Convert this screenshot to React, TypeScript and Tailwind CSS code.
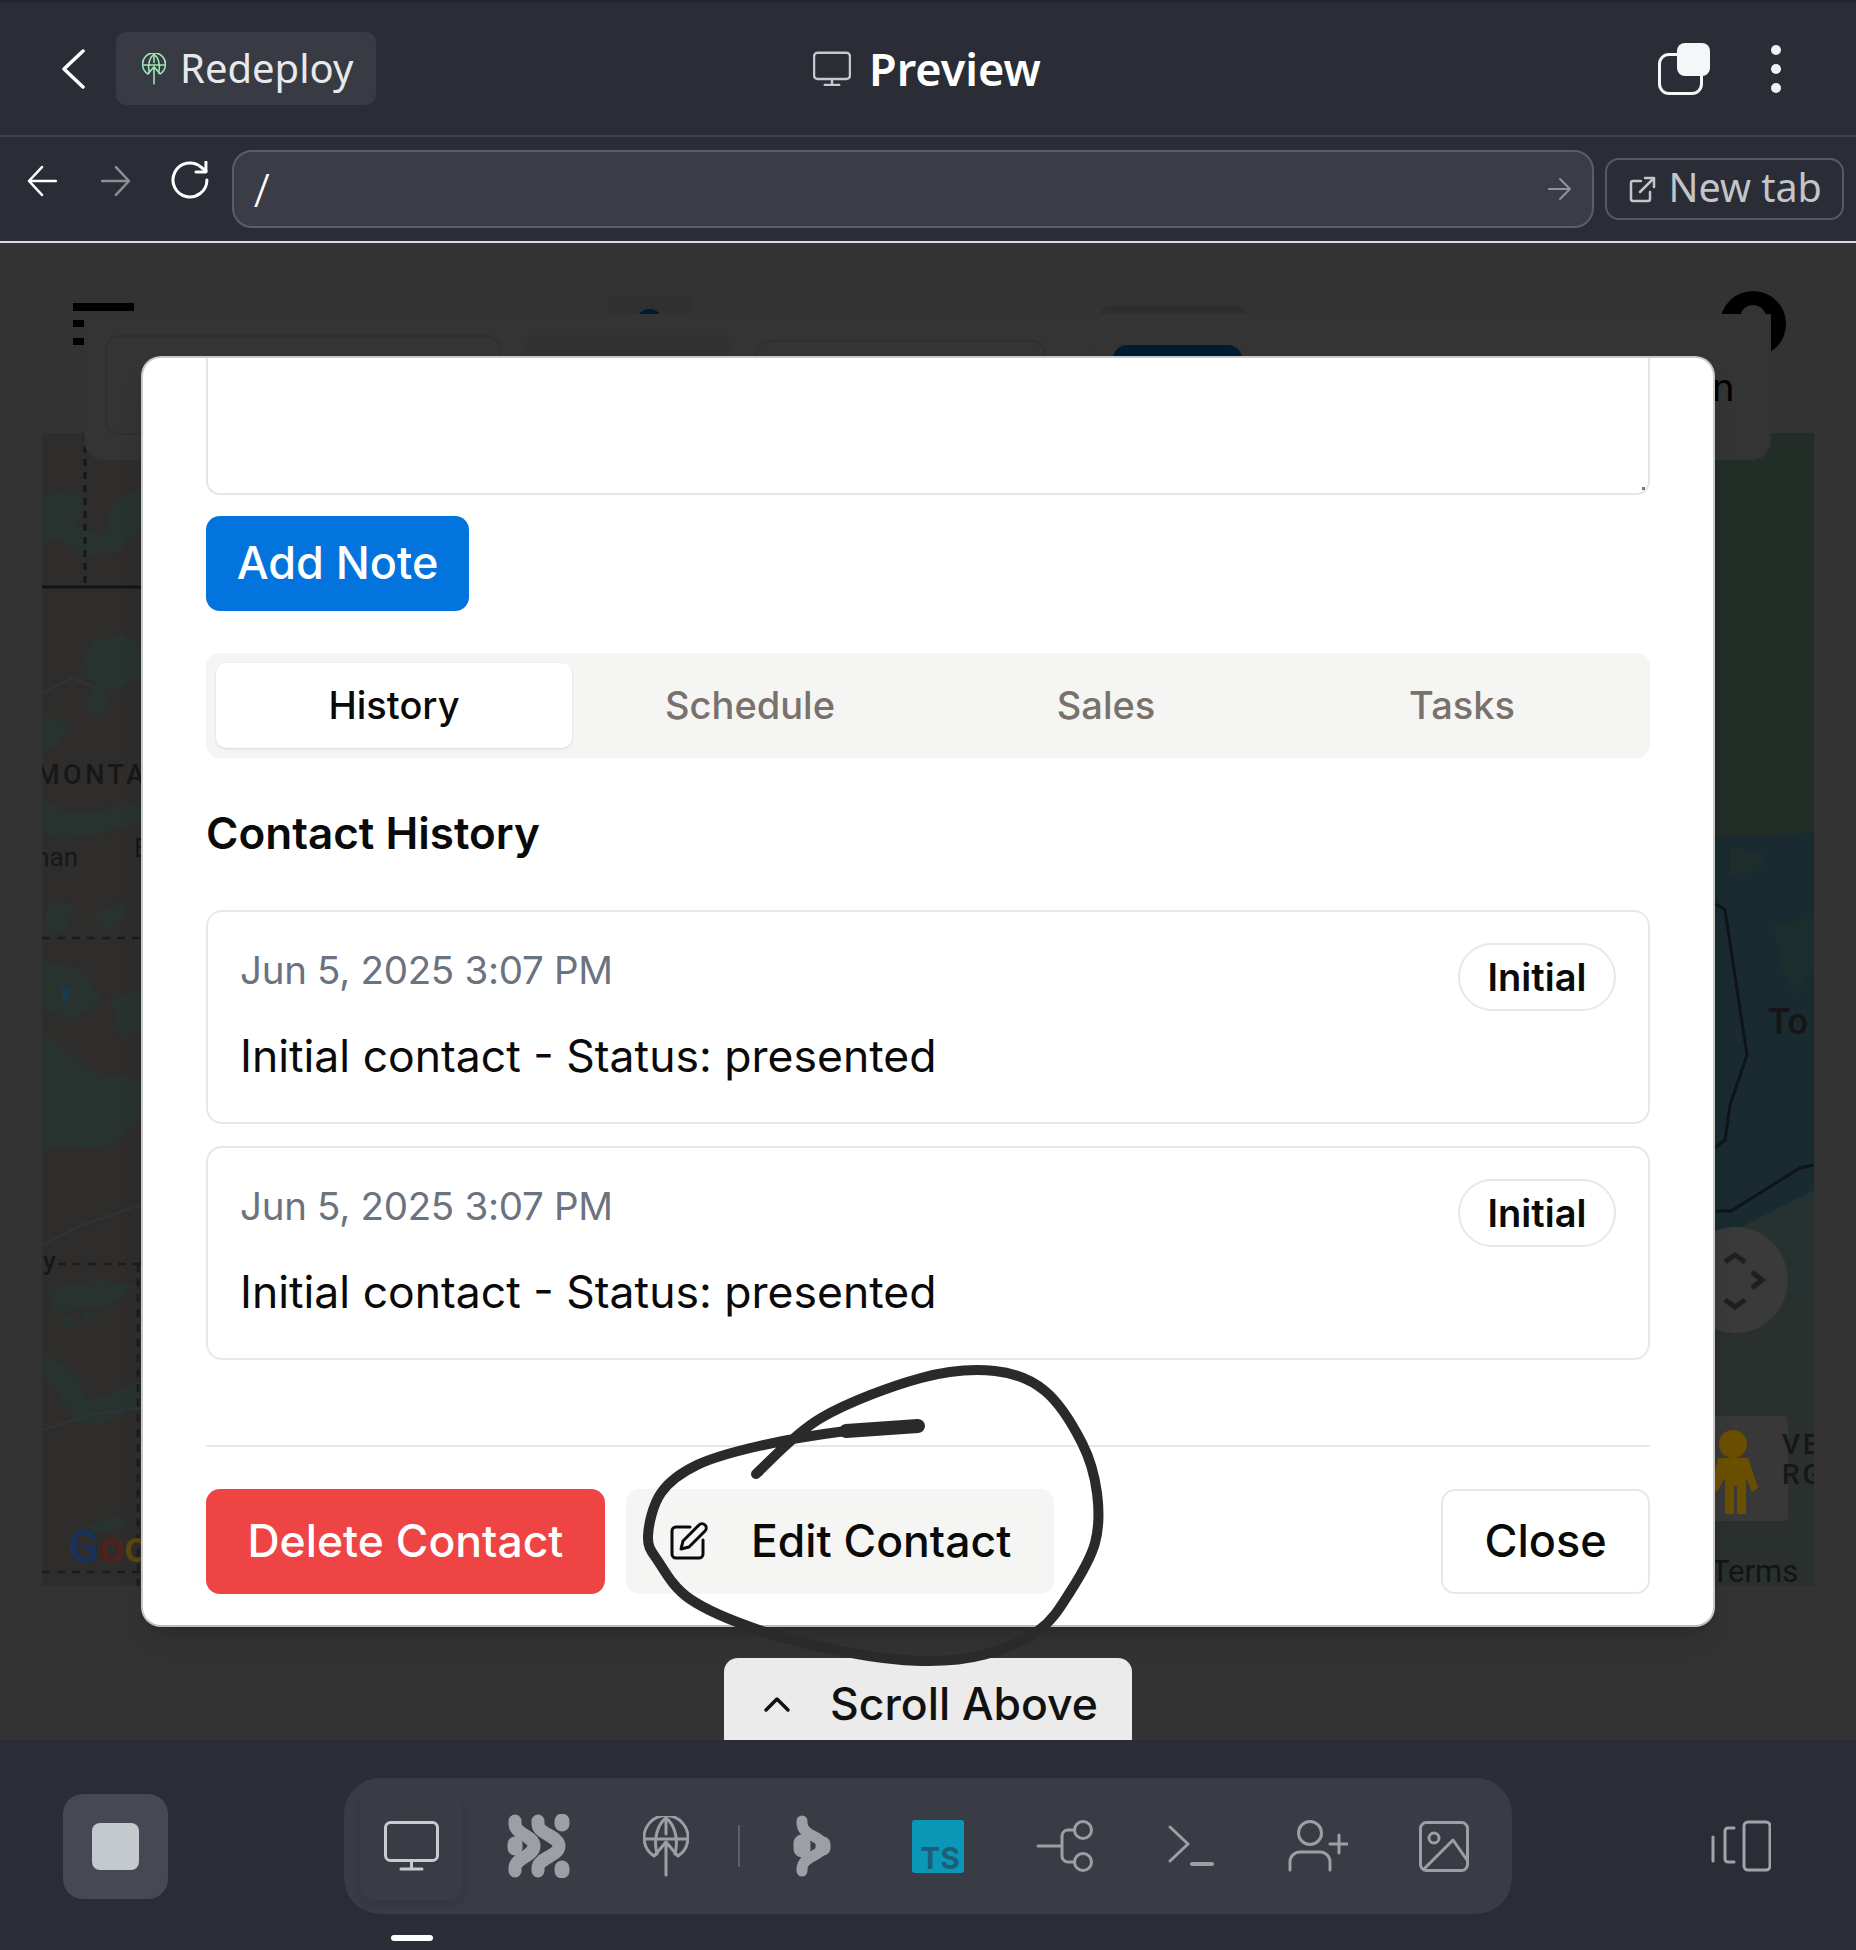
import type { ReactNode } from "react";

const ui = "font-['Inter',sans-serif]";
const chrome = "font-['Noto_Sans',sans-serif]";

function Glyph({ w, h, className, children }: { w: number; h: number; className?: string; children: ReactNode }) {
  return (
    <svg
      width={w}
      height={h}
      viewBox={`0 0 ${w} ${h}`}
      fill="none"
      stroke="currentColor"
      strokeWidth={3}
      strokeLinecap="round"
      strokeLinejoin="round"
      className={className}
    >
      {children}
    </svg>
  );
}

function Monitor({ w = 55, h = 50, sw = 3 }: { w?: number; h?: number; sw?: number }) {
  return (
    <svg width={w} height={h} viewBox="0 0 55 50" fill="none" stroke="currentColor" strokeWidth={sw} strokeLinecap="round">
      <rect x="1.5" y="1.5" width="52" height="38" rx="5" />
      <path d="M27.5 40v8M17 48h21" />
    </svg>
  );
}

function GlobeArrow({ w = 46, h = 61, sw = 3 }: { w?: number; h?: number; sw?: number }) {
  return (
    <svg width={w} height={h} viewBox="0 0 46 61" fill="none" stroke="currentColor" strokeWidth={sw} strokeLinecap="round" strokeLinejoin="round">
      <path d="M11 40A22 22 0 1 1 35 40" />
      <path d="M14 38C10 22 15 8 23 2C31 8 36 22 32 38" />
      <path d="M2 23h42M23 2v16" />
      <path d="M23 59V26M12 39l11-13 11 13" />
    </svg>
  );
}

// curve through the points, for the pen scribble
function smooth(pts: number[][]) {
  let d = `M${pts[0][0]} ${pts[0][1]}`;
  for (let i = 0; i < pts.length - 1; i++) {
    const p0 = pts[Math.max(i - 1, 0)];
    const p1 = pts[i];
    const p2 = pts[i + 1];
    const p3 = pts[Math.min(i + 2, pts.length - 1)];
    d += ` C${p1[0] + (p2[0] - p0[0]) / 6} ${p1[1] + (p2[1] - p0[1]) / 6} ${p2[0] - (p3[0] - p1[0]) / 6} ${p2[1] - (p3[1] - p1[1]) / 6} ${p2[0]} ${p2[1]}`;
  }
  return d;
}

const scribble = [
  [756, 1474], [821, 1418], [921, 1378], [995, 1371], [1045, 1391], [1082, 1443], [1097, 1493],
  [1095, 1543], [1070, 1592], [1039, 1630], [983, 1655], [921, 1661], [846, 1652], [759, 1630],
  [690, 1599], [658, 1561], [648, 1536], [661, 1493], [697, 1465], [759, 1446], [846, 1431], [918, 1426],
];

function MapBackdrop() {
  return (
    <svg viewBox="42 433 1772 1153" width="1772" height="1153" className="block">
      <rect x="42" y="433" width="1772" height="1153" fill="#2e2d2c" />
      {/* left strip */}
      <g fill="#28322f">
        <path d="M42 498l24-10 20 12-10 26 28 10 8-30 29-20v40l-24 26-36 4-20-18-19 8z" />
        <path d="M92 642l30-8 19 10v34l-30 14-10 24-16-8 10-26-16-10z" />
        <path d="M42 716l28 8-12 20-16 8z" />
        <path d="M42 800l30 14 30-4 39-8v20l-50 14-30 4-19-10z" />
        <path d="M50 900l24 6-8 26-24 4zM92 916l30-14 8 8-24 20z" />
        <path d="M42 960l40 10 20 30-30 20-40-16zM110 1000l31-10v40l-20 6z" />
        <path d="M42 1032l50 40 49 8v36l-30 30-69 4z" />
        <path d="M48 1288l50-8 40 6-30 20-56 6z" />
        <path d="M60 1318l14-2 4 8-14 4zM82 1312l16 2-10 12z" />
        <path d="M42 1352l34 22 12 26 18-4 35-16v26l-40 18-24-2-35-50z" />
        <path d="M88 1524l30-8 14 10-40 8z" />
      </g>
      <path d="M42 693l30-15 24 10M42 1245l40-20 59-20M42 1430l50-16 49-6" stroke="#2c363a" strokeWidth="2" fill="none" />
      <path d="M60 985l12 6-8 14z" fill="#1b3a4d" />
      <path d="M42 587h99" stroke="#141414" strokeWidth="3" />
      <path d="M85 433v154" stroke="#171717" strokeWidth="3" strokeDasharray="7 6" />
      <path d="M42 938h99M58 1264h83M42 1572h99M138 1264v322" stroke="#1c1c1c" strokeWidth="2.5" strokeDasharray="8 7" fill="none" />
      <g fontFamily="Roboto, sans-serif" fill="#171717">
        <text x="36" y="784" fontSize="27" letterSpacing="3.5" fontWeight="500">MONTA</text>
        <text x="78" y="866" fontSize="26" textAnchor="end">man</text>
        <text x="134" y="857" fontSize="26">B</text>
        <text x="43" y="1270" fontSize="26" fontWeight="500">y</text>
      </g>
      <text x="69" y="1562" fontFamily="Roboto, sans-serif" fontSize="44" fontWeight="500">
        <tspan fill="#17305f">G</tspan>
        <tspan fill="#55201c">o</tspan>
        <tspan fill="#5a4710">o</tspan>
      </text>
      {/* right strip */}
      <rect x="1715" y="433" width="99" height="404" fill="#222d28" />
      <path d="M1715 837l99-4v470h-99z" fill="#192a30" />
      <path d="M1730 846l36 8-8 18-30 4z" fill="#1d2d2c" />
      <path d="M1774 925l40-8v52l-20 26-14-30z" fill="#1c2d2d" />
      <path d="M1715 1240l99-50v107h-99z" fill="#26322f" />
      <path d="M1715 1297h99v289h-99z" fill="#2a302d" />
      <path d="M1716 904l9 6 22 145-17 50-5 35-9 7" stroke="#0f1416" strokeWidth="3" fill="none" />
      <path d="M1716 1211h15l69-43 14-3" stroke="#0f1416" strokeWidth="3" fill="none" />
      <text x="1768" y="1034" fontFamily="Roboto, sans-serif" fontSize="36" fontWeight="500" fill="#151515">To</text>
      <circle cx="1735" cy="1280" r="53" fill="#3a3a3a" />
      <path d="M1725 1262l10-7 10 7M1725 1300l10 7 10-7M1752 1272l10 8-10 8" stroke="#1f1f1f" strokeWidth="5" fill="none" />
      <rect x="1700" y="1416" width="88" height="105" rx="5" fill="#383838" />
      <g fill="#6a4f00">
        <circle cx="1733" cy="1444" r="14" />
        <path d="M1718 1458h30l10 30-6 4-6-14v36h-9v-28h-3v28h-9v-36l-8 14-6-4z" />
      </g>
      <g fontFamily="Roboto, sans-serif" fill="#171717" fontWeight="500">
        <text x="1782" y="1454" fontSize="28" letterSpacing="3">VE</text>
        <text x="1782" y="1484" fontSize="28" letterSpacing="3">RG</text>
      </g>
      <text x="1711" y="1582" fontFamily="Roboto, sans-serif" fontSize="31" fill="#141414">Terms</text>
    </svg>
  );
}

function HistoryCard() {
  return (
    <div className="flex h-[214px] items-start justify-between rounded-[16px] border-2 border-[#e8e8e8] pl-[32px] pr-[32px] pt-[31px]">
      <div>
        <div className="mt-[4px] text-[38.5px] leading-[46px] tracking-[-0.3px] text-[#6b7280]">Jun 5, 2025 3:07 PM</div>
        <div className="mt-[35px] text-[44.5px] leading-[56px] text-[#0a0a0a]">Initial contact - Status: presented</div>
      </div>
      <span className="flex h-[68px] w-[158px] items-center justify-center rounded-full border-2 border-[#e8e8e8] text-[38px] font-semibold text-[#0a0a0a]">
        Initial
      </span>
    </div>
  );
}

export default function App() {
  return (
    <div className="relative flex h-[1950px] w-[1856px] flex-col overflow-hidden bg-[#333333]">
      {/* preview header */}
      <header className={`relative flex h-[137px] shrink-0 items-center border-b-2 border-[#3e434e] border-t-2 border-t-[#23262c] bg-[#2a2d35] pl-[60px] pr-[75px] text-white ${chrome}`}>
        <Glyph w={26} h={40} className="text-white">
          <path d="M23 2L4 20l19 18" strokeWidth={3.5} />
        </Glyph>
        <div className="ml-[30px] flex h-[73px] w-[260px] items-center gap-[14px] rounded-[10px] bg-[#383b43] pl-[26px]">
          <span className="text-[#9fe8b5]"><GlobeArrow w={24} h={32} sw={3} /></span>
          <span className="pb-[2px] text-[40px] leading-none text-[#e8e9eb]">Redeploy</span>
        </div>
        <div className="absolute left-[813px] top-0 flex h-full items-center gap-[18px]">
          <span className="text-[#c6c8cc]"><Monitor w={38} h={36} sw={3.5} /></span>
          <span className="text-[45px] font-semibold leading-none text-white">Preview</span>
        </div>
        <div className="ml-auto flex items-center gap-[61px]">
          <div className="relative h-[52px] w-[52px]">
            <div className="absolute bottom-0 left-0 h-[42px] w-[45px] rounded-[11px] border-[3px] border-[#f4f6f8]" />
            <div className="absolute right-0 top-0 h-[33px] w-[33px] rounded-[8px] bg-[#f4f6f8]" />
          </div>
          <div className="flex flex-col gap-[9px]">
            <span className="h-[10px] w-[10px] rounded-full bg-[#f0f1f3]" />
            <span className="h-[10px] w-[10px] rounded-full bg-[#f0f1f3]" />
            <span className="h-[10px] w-[10px] rounded-full bg-[#f0f1f3]" />
          </div>
        </div>
      </header>

      {/* address bar */}
      <div className={`flex h-[106px] shrink-0 items-center border-b-2 border-[#d8dbe0] bg-[#2a2d35] pl-[27px] pr-[12px] ${chrome}`}>
        <Glyph w={30} h={32} className="-mt-[16px] text-white">
          <path d="M29 16H2M15 2L2 16l13 14" strokeWidth={2.5} />
        </Glyph>
        <Glyph w={30} h={32} className="-mt-[16px] ml-[44px] text-[#8b8e94]">
          <path d="M1 16h27M15 2l13 14-13 14" strokeWidth={2.5} />
        </Glyph>
        <Glyph w={40} h={38} className="-mt-[18px] ml-[40px] text-white">
          <path d="M36 19a17 17 0 1 1-6-13l5 4" strokeWidth={3} />
          <path d="M35 1v10H25" strokeWidth={3} />
        </Glyph>
        <div className="ml-[21px] flex h-[78px] w-[1365px] items-center justify-between rounded-[20px] border-2 border-[#5a5e69] bg-[#3a3d45] pl-[20px] pr-[20px]">
          <span className="text-[46px] font-light leading-none text-white">/</span>
          <Glyph w={24} h={24} className="text-[#8f9298]">
            <path d="M1 12h21M12 2l10 10-10 10" strokeWidth={2} />
          </Glyph>
        </div>
        <div className="ml-[11px] flex h-[62px] w-[239px] items-center gap-[12px] rounded-[14px] border-2 border-[#555964] pl-[22px] text-[#c2c5ca]">
          <Glyph w={27} h={27} className="shrink-0">
            <path d="M12 5H4a2 2 0 0 0-2 2v16a2 2 0 0 0 2 2h15a2 2 0 0 0 2-2v-7" strokeWidth={2.5} />
            <path d="M11 16L25 2M16 2h9v9" strokeWidth={2.5} />
          </Glyph>
          <span className="pb-[2px] text-[39.5px] leading-none">New tab</span>
        </div>
      </div>

      {/* dimmed page behind the dialog */}
      <main className="relative flex-1">
        <div className="h-[190px]" />
        <div className="ml-[42px]">
          <MapBackdrop />
        </div>

        {/* app header, dimmed */}
        <div className="absolute left-[73px] top-[60px] h-[8px] w-[61px] bg-black" />
        <div className="absolute left-[73px] top-[77px] h-[7px] w-[14px] bg-black" />
        <div className="absolute left-[73px] top-[95px] h-[7px] w-[11px] bg-black" />
        <div className="absolute left-[608px] top-[52px] h-[18px] w-[84px] bg-[#303030]" />
        <div className="absolute left-[636px] top-[66px] h-[14px] w-[27px] rounded-t-full bg-[#001c33]" />
        <div className="absolute left-[1100px] top-[62px] h-[14px] w-[147px] rounded-t-[12px] bg-[#2e2e2e]" />
        <div className="absolute left-[1720px] top-[48px] flex h-[66px] w-[66px] justify-center rounded-full bg-black pt-[14px]">
          <div className="h-[26px] w-[26px] rounded-full bg-[#343434]" />
        </div>
        <div className="absolute left-[1736px] top-[85px] h-[14px] w-[22px] bg-[#343434]" />
        <div className="absolute left-[84px] top-[71px] h-[146px] w-[1687px] rounded-b-[20px] bg-[#343434]" />
        <div className="absolute left-[105px] top-[92px] h-[100px] w-[396px] rounded-[14px] border-2 border-[#2f2f2f]" />
        <div className="absolute left-[522px] top-[92px] h-[100px] w-[210px] rounded-[14px] bg-[#323232]" />
        <div className="absolute left-[756px] top-[97px] h-[100px] w-[290px] rounded-[14px] border-2 border-[#2f2f2f]" />
        <div className="absolute left-[1090px] top-[102px] h-[40px] w-[1px] bg-[#2f2f2f]" />
        <div className="absolute left-[1113px] top-[102px] h-[30px] w-[129px] rounded-t-[14px] bg-[#001c33]" />
        <span className={`absolute left-[1712px] top-[125px] text-[38px] leading-none text-black ${ui}`}>n</span>

        {/* dialog */}
        <div className={`absolute left-[141px] top-[113px] flex h-[1271px] w-[1574px] flex-col rounded-[20px] border-[2px] border-[#c9c9c9] border-b-[#bdbdbd] bg-white px-[63px] shadow-xl ${ui}`}>
          <div className="relative h-[137px] shrink-0 rounded-b-[14px] border-2 border-t-0 border-[#e5e5e5]">
            <span className="absolute bottom-[3px] right-[3px] h-[3px] w-[3px] bg-[#777777]" />
          </div>
          <button className="mt-[21px] h-[95px] w-[263px] shrink-0 rounded-[14px] bg-[#0374dd] pb-[2px] text-[45px] font-medium text-white">
            Add Note
          </button>
          <div className="mt-[42px] grid h-[105px] shrink-0 grid-cols-4 rounded-[14px] bg-[#f5f5f4] p-[10px] text-[38px] font-medium text-[#78716c]">
            <div className="flex items-center justify-center rounded-[10px] bg-white text-[#0a0a0a] shadow-sm">History</div>
            <div className="flex items-center justify-center">Schedule</div>
            <div className="flex items-center justify-center">Sales</div>
            <div className="flex items-center justify-center">Tasks</div>
          </div>
          <h2 className="mt-[50px] shrink-0 text-[44px] font-semibold leading-[50px] text-[#0a0a0a]">Contact History</h2>
          <div className="mt-[52px] flex shrink-0 flex-col gap-[22px]">
            <HistoryCard />
            <HistoryCard />
          </div>
          <div className="mt-[85px] h-[2px] shrink-0 bg-[#e8e8e8]" />
          <div className="mt-[42px] flex shrink-0 items-center gap-[21px]">
            <button className="h-[105px] w-[399px] rounded-[14px] bg-[#ef4444] pb-[1px] text-[44.5px] font-medium text-white">
              Delete Contact
            </button>
            <button className="flex h-[105px] w-[428px] items-center rounded-[14px] bg-[#f5f5f4] pb-[1px] pl-[44px] text-[44.5px] font-medium text-[#0a0a0a]">
              <Glyph w={38} h={38} className="mr-[43px] shrink-0">
                <path d="M20 5H6a4 4 0 0 0-4 4v23a4 4 0 0 0 4 4h23a4 4 0 0 0 4-4V18" />
                <path d="M29 3a4 4 0 0 1 6 6L19 25l-8 2 2-8z" />
              </Glyph>
              Edit Contact
            </button>
            <button className="ml-auto h-[105px] w-[209px] rounded-[14px] border-2 border-[#e8e8e8] bg-white pb-[1px] text-[45px] font-medium text-[#0a0a0a]">
              Close
            </button>
          </div>
        </div>

        {/* scroll above tab */}
        <div className={`absolute bottom-0 left-[724px] flex h-[82px] w-[408px] items-center rounded-t-[14px] bg-[#ebebeb] pl-[38px] pt-[10px] text-[44.5px] font-medium text-[#111111] ${ui}`}>
          <Glyph w={30} h={18} className="mr-[38px] shrink-0">
            <path d="M4 15L15 4l11 11" strokeWidth={3.5} />
          </Glyph>
          Scroll Above
        </div>
      </main>

      {/* bottom tool bar */}
      <footer className="relative flex h-[210px] shrink-0 items-center bg-[#2a2d35] pl-[63px] pt-[2px] text-[#9c9fa4]">
        <div className="flex h-[105px] w-[105px] items-center justify-center rounded-[20px] bg-[#464953]">
          <div className="h-[47px] w-[47px] rounded-[8px] bg-[#c4c9cd]" />
        </div>
        <div className="ml-[176px] flex h-[136px] w-[1168px] items-center rounded-[36px] bg-[#393c44] pl-[16px]">
          <div className="flex items-center gap-[24px]">
            <div className="flex h-[107px] w-[103px] items-center justify-center rounded-[14px] bg-[#393c44] text-[#c9cbcf] shadow-[0_4px_10px_rgba(0,0,0,0.12)]">
              <Monitor />
            </div>
            <div className="flex w-[103px] justify-center">
              <svg width="64" height="64" viewBox="0 0 64 64" fill="none" stroke="currentColor" strokeWidth="13" strokeLinecap="round">
                <path d="M8 7v3C8 20 27 22 27 32C27 42 8 44 8 54v3" />
                <path d="M31 7v3C31 20 52 22 52 32C52 42 31 44 31 54v3" />
                <path d="M55 7v3M55 54v3M8 30v4" strokeWidth="15" />
              </svg>
            </div>
            <div className="flex w-[103px] justify-center">
              <GlobeArrow />
            </div>
          </div>
          <div className="ml-[21px] mr-[20px] h-[42px] w-[2px] bg-[#5d6069]" />
          <div className="flex items-center gap-[23.5px]">
            <div className="flex w-[103px] justify-center">
              <svg width="40" height="64" viewBox="0 0 40 64" fill="none" stroke="currentColor" strokeWidth="11" strokeLinecap="round">
                <path d="M10 7v2C10 22 30 22 32 32C30 42 10 42 10 55v2" />
                <path d="M10 29v6" strokeWidth="17" />
                <path d="M31 30v4" strokeWidth="15" />
              </svg>
            </div>
            <div className="flex w-[103px] justify-center">
              <div className={`flex h-[53px] w-[52px] items-end justify-end rounded-[3px] bg-[#0b97b7] pr-[4px] text-[30px] font-bold leading-[30px] text-[#1d5f7a] ${ui}`}>
                TS
              </div>
            </div>
            <div className="flex w-[103px] justify-center">
              <Glyph w={58} h={52}>
                <circle cx="47" cy="10" r="8.5" />
                <circle cx="47" cy="42" r="8.5" />
                <path d="M2 26h23M38 10h-6a6 6 0 0 0-6 6v20a6 6 0 0 0 6 6h6" />
              </Glyph>
            </div>
            <div className="flex w-[103px] justify-center">
              <Glyph w={46} h={42}>
                <path d="M2 2l18 17L2 36" />
                <path d="M24 39h20" strokeWidth={4} />
              </Glyph>
            </div>
            <div className="flex w-[103px] justify-center">
              <Glyph w={60} h={52}>
                <circle cx="22" cy="13" r="11.5" />
                <path d="M2 50V42a10 10 0 0 1 10-10h20a10 10 0 0 1 10 10v8" />
                <path d="M51 15v18M42 24h18" />
              </Glyph>
            </div>
            <div className="flex w-[103px] justify-center">
              <Glyph w={50} h={51}>
                <rect x="1.5" y="1.5" width="47" height="48" rx="6" />
                <circle cx="15" cy="17" r="5" />
                <path d="M5 48L34 19l14 20" />
              </Glyph>
            </div>
          </div>
        </div>
        <div className="ml-[199px] text-[#a0a3a8]">
          <Glyph w={60} h={52}>
            <path d="M2 17v24M23 8h-6a3 3 0 0 0-3 3v28a3 3 0 0 0 3 3h6" />
            <rect x="33" y="2" width="26" height="48" rx="4" />
          </Glyph>
        </div>
        <div className="absolute bottom-[9px] left-[391px] h-[6px] w-[42px] rounded-full bg-white" />
      </footer>

      {/* pen scribble drawn over the screenshot */}
      <svg viewBox="630 1360 480 310" className="absolute left-[630px] top-[1360px] h-[310px] w-[480px]" fill="none" stroke="#2a2a2a" strokeLinecap="round">
        <path d={smooth(scribble)} strokeWidth="10" />
        <path d="M846 1431L918 1426" strokeWidth="14" />
      </svg>
    </div>
  );
}
